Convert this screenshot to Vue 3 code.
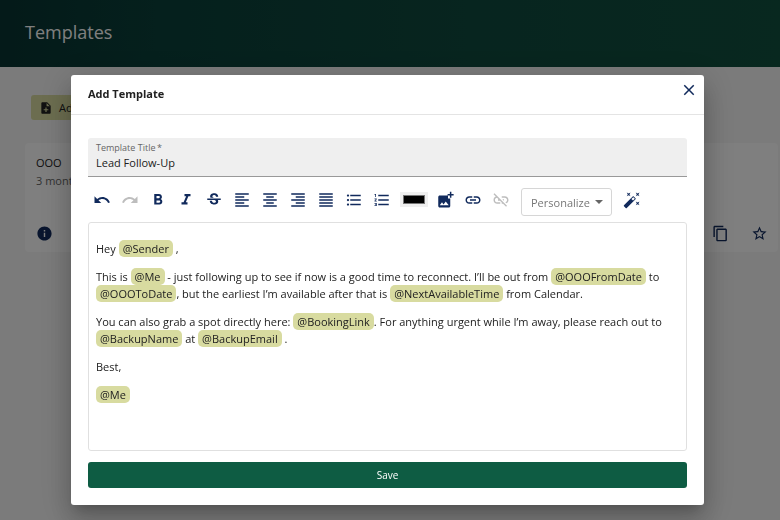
<template>
  <div class="page">
    <header class="page-header">
      <h1>Templates</h1>
    </header>
    <main class="page-body">
      <button type="button" class="add-btn">
        <svg viewBox="0 0 24 24"><path :d="icons.noteAdd" /></svg>
        Add Template
      </button>
      <article class="card">
        <h2>OOO</h2>
        <p>3 months ago</p>
        <div class="card-actions">
          <button type="button" class="card-btn" aria-label="Info">
            <svg viewBox="0 0 24 24"><path :d="icons.info" /></svg>
          </button>
          <span class="spacer"></span>
          <button type="button" class="card-btn" aria-label="Copy">
            <svg viewBox="0 0 24 24"><path :d="icons.copy" /></svg>
          </button>
          <button type="button" class="card-btn" aria-label="Favorite">
            <svg viewBox="0 0 24 24"><path :d="icons.star" /></svg>
          </button>
        </div>
      </article>
    </main>

    <!-- dialog -->
    <div class="overlay">
      <form class="dialog" role="dialog" aria-labelledby="dialog-title" @submit.prevent>
        <div class="dialog-header">
          <h2 id="dialog-title">Add Template</h2>
          <button type="button" class="close-btn" aria-label="Close">
            <svg viewBox="0 0 24 24"><path :d="icons.close" /></svg>
          </button>
        </div>

        <div class="dialog-body">
          <div class="field">
            <label for="template-title">Template Title&thinsp;*</label>
            <input id="template-title" v-model="title" type="text" required />
          </div>

          <div class="toolbar">
            <button
              v-for="tool in tools"
              :key="tool.icon"
              type="button"
              class="tool"
              :disabled="tool.disabled"
              :aria-label="tool.label"
            >
              <svg viewBox="0 0 24 24"><path :d="icons[tool.icon]" /></svg>
            </button>
            <input v-model="color" type="color" class="color" aria-label="Text color" />
            <button
              v-for="tool in insertTools"
              :key="tool.icon"
              type="button"
              class="tool"
              :disabled="tool.disabled"
              :aria-label="tool.label"
            >
              <svg viewBox="0 0 24 24"><path :d="icons[tool.icon]" /></svg>
            </button>
            <div class="select-wrap">
              <select v-model="variable" aria-label="Personalize">
                <option value="">Personalize</option>
                <option v-for="name in variables" :key="name" :value="name">{{ name }}</option>
              </select>
            </div>
            <button type="button" class="tool" aria-label="Rewrite">
              <svg viewBox="0 0 24 24"><path :d="icons.wand" /></svg>
            </button>
          </div>

          <div class="editor" contenteditable="true" role="textbox" aria-label="Template body">
            <p v-for="(parts, i) in paragraphs" :key="i">
              <template v-for="(part, j) in parts" :key="j">
                <span v-if="part.startsWith('@')" class="chip">{{ part }}</span>
                <template v-else>{{ part }}</template>
              </template>
            </p>
          </div>

          <button type="submit" class="save-btn">Save</button>
        </div>
      </form>
    </div>
  </div>
</template>

<script setup>
import { ref } from 'vue'

const title = ref('Lead Follow-Up')
const color = ref('#000000')
const variable = ref('')

const variables = ['@Sender', '@Me', '@OOOFromDate', '@OOOToDate', '@BookingLink']

const tools = [
  { icon: 'undo', label: 'Undo' },
  { icon: 'redo', label: 'Redo', disabled: true },
  { icon: 'bold', label: 'Bold' },
  { icon: 'italic', label: 'Italic' },
  { icon: 'strike', label: 'Strikethrough' },
  { icon: 'alignLeft', label: 'Align left' },
  { icon: 'alignCenter', label: 'Align center' },
  { icon: 'alignRight', label: 'Align right' },
  { icon: 'justify', label: 'Justify' },
  { icon: 'bullets', label: 'Bulleted list' },
  { icon: 'numbers', label: 'Numbered list' }
]

const insertTools = [
  { icon: 'image', label: 'Insert image' },
  { icon: 'link', label: 'Insert link' },
  { icon: 'unlink', label: 'Remove link', disabled: true }
]

// parts that start with @ are drawn as chips
const paragraphs = [
  ['Hey ', '@Sender', ' ,'],
  [
    'This is ', '@Me', ' - just following up to see if now is a good time to reconnect. I’ll be out from ',
    '@OOOFromDate', ' to ', '@OOOToDate', ', but the earliest I’m available after that is ',
    '@NextAvailableTime', ' from Calendar.'
  ],
  [
    'You can also grab a spot directly here: ', '@BookingLink',
    '. For anything urgent while I’m away, please reach out to ', '@BackupName', ' at ', '@BackupEmail', ' .'
  ],
  ['Best,'],
  ['@Me']
]

const icons = {
  noteAdd: 'M14 2H6c-1.1 0-2 .9-2 2v16c0 1.1.9 2 2 2h12c1.1 0 2-.9 2-2V8l-6-6zm2 14h-3v3h-2v-3H8v-2h3v-3h2v3h3v2zm-3-7V3.5L18.5 9H13z',
  info: 'M12 2C6.48 2 2 6.48 2 12s4.48 10 10 10 10-4.48 10-10S17.52 2 12 2zm1 15h-2v-6h2v6zm0-8h-2V7h2v2z',
  copy: 'M16 1H4c-1.1 0-2 .9-2 2v14h2V3h12V1zm3 4H8c-1.1 0-2 .9-2 2v14c0 1.1.9 2 2 2h11c1.1 0 2-.9 2-2V7c0-1.1-.9-2-2-2zm0 16H8V7h11v14z',
  star: 'M22 9.24l-7.19-.62L12 2 9.19 8.63 2 9.24l5.46 4.73L5.82 21 12 17.27 18.18 21l-1.63-7.03L22 9.24zM12 15.4l-3.76 2.27 1-4.28-3.32-2.88 4.38-.38L12 6.1l1.71 4.04 4.38.38-3.32 2.88 1 4.28L12 15.4z',
  close: 'M19 6.41L17.59 5 12 10.59 6.41 5 5 6.41 10.59 12 5 17.59 6.41 19 12 13.41 17.59 19 19 17.59 13.41 12z',
  undo: 'M12.5 8c-2.65 0-5.05.99-6.9 2.6L2 7v9h9l-3.62-3.62c1.39-1.16 3.16-1.88 5.12-1.88 3.54 0 6.55 2.31 7.6 5.5l2.37-.78C21.08 11.03 17.15 8 12.5 8z',
  redo: 'M18.4 10.6C16.55 8.99 14.15 8 11.5 8c-4.65 0-8.58 3.03-9.96 7.22L3.9 16c1.05-3.19 4.05-5.5 7.6-5.5 1.95 0 3.73.72 5.12 1.88L13 16h9V7l-3.6 3.6z',
  bold: 'M15.6 10.79c.97-.67 1.65-1.77 1.65-2.79 0-2.26-1.75-4-4-4H7v14h7.04c2.09 0 3.71-1.7 3.71-3.79 0-1.52-.86-2.82-2.15-3.42zM10 6.5h3c.83 0 1.5.67 1.5 1.5s-.67 1.5-1.5 1.5h-3v-3zm3.5 9H10v-3h3.5c.83 0 1.5.67 1.5 1.5s-.67 1.5-1.5 1.5z',
  italic: 'M10 4v3h2.21l-3.42 8H6v3h8v-3h-2.21l3.42-8H18V4z',
  strike: 'M7.24 8.75c-.26-.48-.39-1.03-.39-1.67 0-.61.13-1.16.4-1.67.26-.5.63-.93 1.11-1.29.48-.35 1.05-.63 1.7-.83.66-.19 1.39-.29 2.18-.29.81 0 1.54.11 2.21.34.66.22 1.23.54 1.69.94.47.4.83.88 1.08 1.43s.38 1.15.38 1.81h-3.01c0-.31-.05-.59-.15-.85-.09-.27-.24-.49-.44-.68-.2-.19-.45-.33-.75-.44-.3-.1-.66-.16-1.06-.16-.39 0-.74.04-1.03.13s-.53.21-.72.36c-.19.16-.34.34-.44.55-.1.21-.15.43-.15.66 0 .48.25.88.74 1.21.38.25.77.48 1.41.7H7.39c-.05-.08-.11-.17-.15-.25zM21 12v-2H3v2h9.62c.18.07.4.14.55.2.37.17.66.34.87.51s.35.36.43.57c.07.2.11.43.11.69 0 .23-.05.45-.14.66-.09.2-.23.38-.42.53-.19.15-.42.26-.71.35-.29.08-.63.13-1.01.13-.43 0-.83-.04-1.18-.13s-.66-.23-.91-.42c-.25-.19-.45-.44-.59-.75s-.25-.76-.25-1.21H6.4c0 .55.08 1.13.24 1.58s.37.85.65 1.21c.28.35.6.66.98.92.37.26.78.48 1.22.65.44.17.9.3 1.38.39.48.08.96.13 1.44.13.8 0 1.53-.09 2.18-.28s1.21-.45 1.67-.79c.46-.34.82-.77 1.07-1.27s.38-1.07.38-1.71c0-.6-.1-1.14-.31-1.61-.05-.11-.11-.23-.17-.33H21z',
  alignLeft: 'M15 15H3v2h12v-2zm0-8H3v2h12V7zM3 13h18v-2H3v2zm0 8h18v-2H3v2zM3 3v2h18V3H3z',
  alignCenter: 'M7 15v2h10v-2H7zm-4 6h18v-2H3v2zm0-8h18v-2H3v2zm4-6v2h10V7H7zM3 3v2h18V3H3z',
  alignRight: 'M3 21h18v-2H3v2zm6-4h12v-2H9v2zm-6-4h18v-2H3v2zm6-4h12V7H9v2zM3 3v2h18V3H3z',
  justify: 'M3 21h18v-2H3v2zm0-4h18v-2H3v2zm0-4h18v-2H3v2zm0-4h18V7H3v2zm0-6v2h18V3H3z',
  bullets: 'M4 10.5c-.83 0-1.5.67-1.5 1.5s.67 1.5 1.5 1.5 1.5-.67 1.5-1.5-.67-1.5-1.5-1.5zm0-6c-.83 0-1.5.67-1.5 1.5S3.17 7.5 4 7.5 5.5 6.83 5.5 6 4.83 4.5 4 4.5zm0 12c-.83 0-1.5.68-1.5 1.5s.68 1.5 1.5 1.5 1.5-.68 1.5-1.5-.67-1.5-1.5-1.5zM7 19h14v-2H7v2zm0-6h14v-2H7v2zm0-8v2h14V5H7z',
  numbers: 'M2 17h2v.5H3v1h1v.5H2v1h3v-4H2v1zm1-9h1V4H2v1h1v3zm-1 3h1.8L2 13.1v.9h3v-1H3.2L5 10.9V10H2v1zm5-6v2h14V5H7zm0 14h14v-2H7v2zm0-6h14v-2H7v2z',
  image: 'M20.5 6v3h-2V6h-3V4h3V1h2v3h3v2h-3zM16 10V6H5c-1.1 0-2 .9-2 2v12c0 1.1.9 2 2 2h12c1.1 0 2-.9 2-2V10h-3zM5 19l3-4 2 3 3-4 4 5H5z',
  link: 'M3.9 12c0-1.71 1.39-3.1 3.1-3.1h4V7H7c-2.76 0-5 2.24-5 5s2.24 5 5 5h4v-1.9H7c-1.71 0-3.1-1.39-3.1-3.1zM8 13h8v-2H8v2zm9-6h-4v1.9h4c1.71 0 3.1 1.39 3.1 3.1s-1.39 3.1-3.1 3.1h-4V17h4c2.76 0 5-2.24 5-5s-2.24-5-5-5z',
  unlink: 'M17 7h-4v1.9h4c1.71 0 3.1 1.39 3.1 3.1 0 1.43-.98 2.63-2.31 2.98l1.46 1.46C20.88 15.61 22 13.95 22 12c0-2.76-2.24-5-5-5zm-1 4h-2.19l2 2H16zM2 4.27l3.11 3.11C3.29 8.12 2 9.91 2 12c0 2.76 2.24 5 5 5h4v-1.9H7c-1.71 0-3.1-1.39-3.1-3.1 0-1.59 1.21-2.9 2.76-3.07L8.73 11H8v2h2.73L13 15.27V17h1.73l4.01 4L20 19.74 3.27 3 2 4.27z',
  wand: 'M7.5 5.6L5 7l1.4-2.5L5 2l2.5 1.4L10 2 8.6 4.5 10 7 7.5 5.6zm12 9.8L22 14l-1.4 2.5L22 19l-2.5-1.4L17 19l1.4-2.5L17 14l2.5 1.4zM22 2l-1.4 2.5L22 7l-2.5-1.4L17 7l1.4-2.5L17 2l2.5 1.4L22 2zm-8.66 10.78l2.44-2.44-2.12-2.12-2.44 2.44 2.12 2.12zm1.03-5.49l2.34 2.34c.39.37.39 1.02 0 1.41L5.04 22.71c-.39.39-1.04.39-1.41 0l-2.34-2.34c-.39-.37-.39-1.02 0-1.41L12.96 7.29c.39-.39 1.04-.39 1.41 0z'
}
</script>

<style>
body {
  margin: 0;
  background: #f6f6f6;
}
</style>

<style scoped>
.page {
  min-height: 100vh;
  font-family: 'Open Sans', 'Noto Sans', sans-serif;
  font-size: 11px;
  color: #212121;
}

.page *,
.page *::before {
  box-sizing: border-box;
}

h1,
h2,
p {
  margin: 0;
  font-weight: 400;
}

button,
input,
select {
  font: inherit;
  color: inherit;
  padding: 0;
  border: 0;
  background: none;
}

svg {
  display: block;
  fill: currentColor;
}

/* page behind the dialog */
.page-header {
  display: flex;
  align-items: center;
  height: 67px;
  padding: 0 25px 4px;
  background: linear-gradient(90deg, #083432, #0a403a 20%, #0f4a3e 60%, #10503e);
}

.page-header h1 {
  font-size: 18px;
  line-height: 24px;
  color: #fff;
}

.page-body {
  padding: 28px 2px 0 25px;
}

.add-btn {
  display: flex;
  align-items: center;
  gap: 6px;
  height: 25px;
  margin-left: 6px;
  padding: 0 8px;
  border-radius: 3px;
  background: #d8dba0;
}

.add-btn svg {
  width: 14px;
  height: 14px;
}

.card {
  margin-top: 23px;
  padding: 11px 10px 10px 11px;
  border-radius: 4px;
  background: #fff;
}

.card h2 {
  font-size: 11px;
  line-height: 18px;
}

.card p {
  line-height: 18px;
  color: #666;
}

.card-actions {
  display: flex;
  align-items: center;
  gap: 22px;
  margin-top: 35px;
  color: #112a5c;
}

.card-btn svg {
  width: 17px;
  height: 17px;
}

.spacer {
  flex: 1;
}

/* dialog */
.overlay {
  position: fixed;
  inset: 0;
  padding: 75px 76px 15px 71px;
  background: rgba(0, 0, 0, 0.5);
}

.dialog {
  display: flex;
  flex-direction: column;
  height: 100%;
  border-radius: 3px;
  background: #fff;
  box-shadow:
    0 8px 11px -5px rgba(0, 0, 0, 0.2),
    0 17px 27px 2px rgba(0, 0, 0, 0.14),
    0 6px 32px 6px rgba(0, 0, 0, 0.12);
}

.dialog-header {
  display: flex;
  justify-content: space-between;
  height: 40px;
  padding: 0 6px 0 17px;
  border-bottom: 1px solid #e4e4e4;
}

.dialog-header h2 {
  font-size: 11px;
  line-height: 38px;
  font-weight: 700;
}

.close-btn {
  align-self: flex-start;
  margin-top: 6px;
  color: #112a5c;
}

.close-btn svg {
  width: 18px;
  height: 18px;
}

.dialog-body {
  display: flex;
  flex: 1;
  flex-direction: column;
  padding: 23px 17px 17px;
}

.field {
  display: flex;
  flex-direction: column;
  height: 39px;
  padding: 4px 8px 0;
  border-bottom: 1px solid #999;
  border-radius: 3px 3px 0 0;
  background: #efefef;
}

.field label {
  font-size: 9px;
  line-height: 12px;
  color: #666;
}

.field input {
  width: 100%;
  height: 17px;
  outline: none;
}

.toolbar {
  display: flex;
  align-items: center;
  height: 45px;
  color: #112a5c;
}

.tool {
  display: flex;
  align-items: center;
  justify-content: center;
  width: 28px;
  height: 28px;
}

.tool:disabled {
  color: #bdbdbd;
}

.tool svg {
  width: 18px;
  height: 18px;
}

.color {
  width: 28px;
  height: 15px;
  margin: 0 3px 0 4px;
  padding: 3px;
  background: #efefef;
}

.color::-webkit-color-swatch-wrapper {
  padding: 0;
}

.color::-webkit-color-swatch {
  border: 1px solid #767676;
}

.select-wrap {
  position: relative;
  margin: 5px 6px 0;
}

.select-wrap::after {
  content: '';
  position: absolute;
  top: 12px;
  right: 9px;
  border: 4px solid transparent;
  border-top-color: #666;
  border-bottom: 0;
  pointer-events: none;
}

.select-wrap select {
  display: block;
  width: 91px;
  height: 28px;
  padding: 0 9px;
  appearance: none;
  border: 1px solid #d6d6d6;
  border-radius: 3px;
  color: #777;
}

.editor {
  flex: 1;
  padding: 17px 7px;
  border: 1px solid #e0e0e0;
  border-radius: 3px;
  line-height: 17px;
  outline: none;
}

.editor p {
  margin-bottom: 11px;
}

.chip {
  padding: 1px 4px;
  border-radius: 5px;
  background: #d8dba0;
}

.save-btn {
  height: 26px;
  margin-top: 11px;
  border-radius: 3px;
  background: #0e5c43;
  color: #fff;
  font-size: 10px;
}
</style>
